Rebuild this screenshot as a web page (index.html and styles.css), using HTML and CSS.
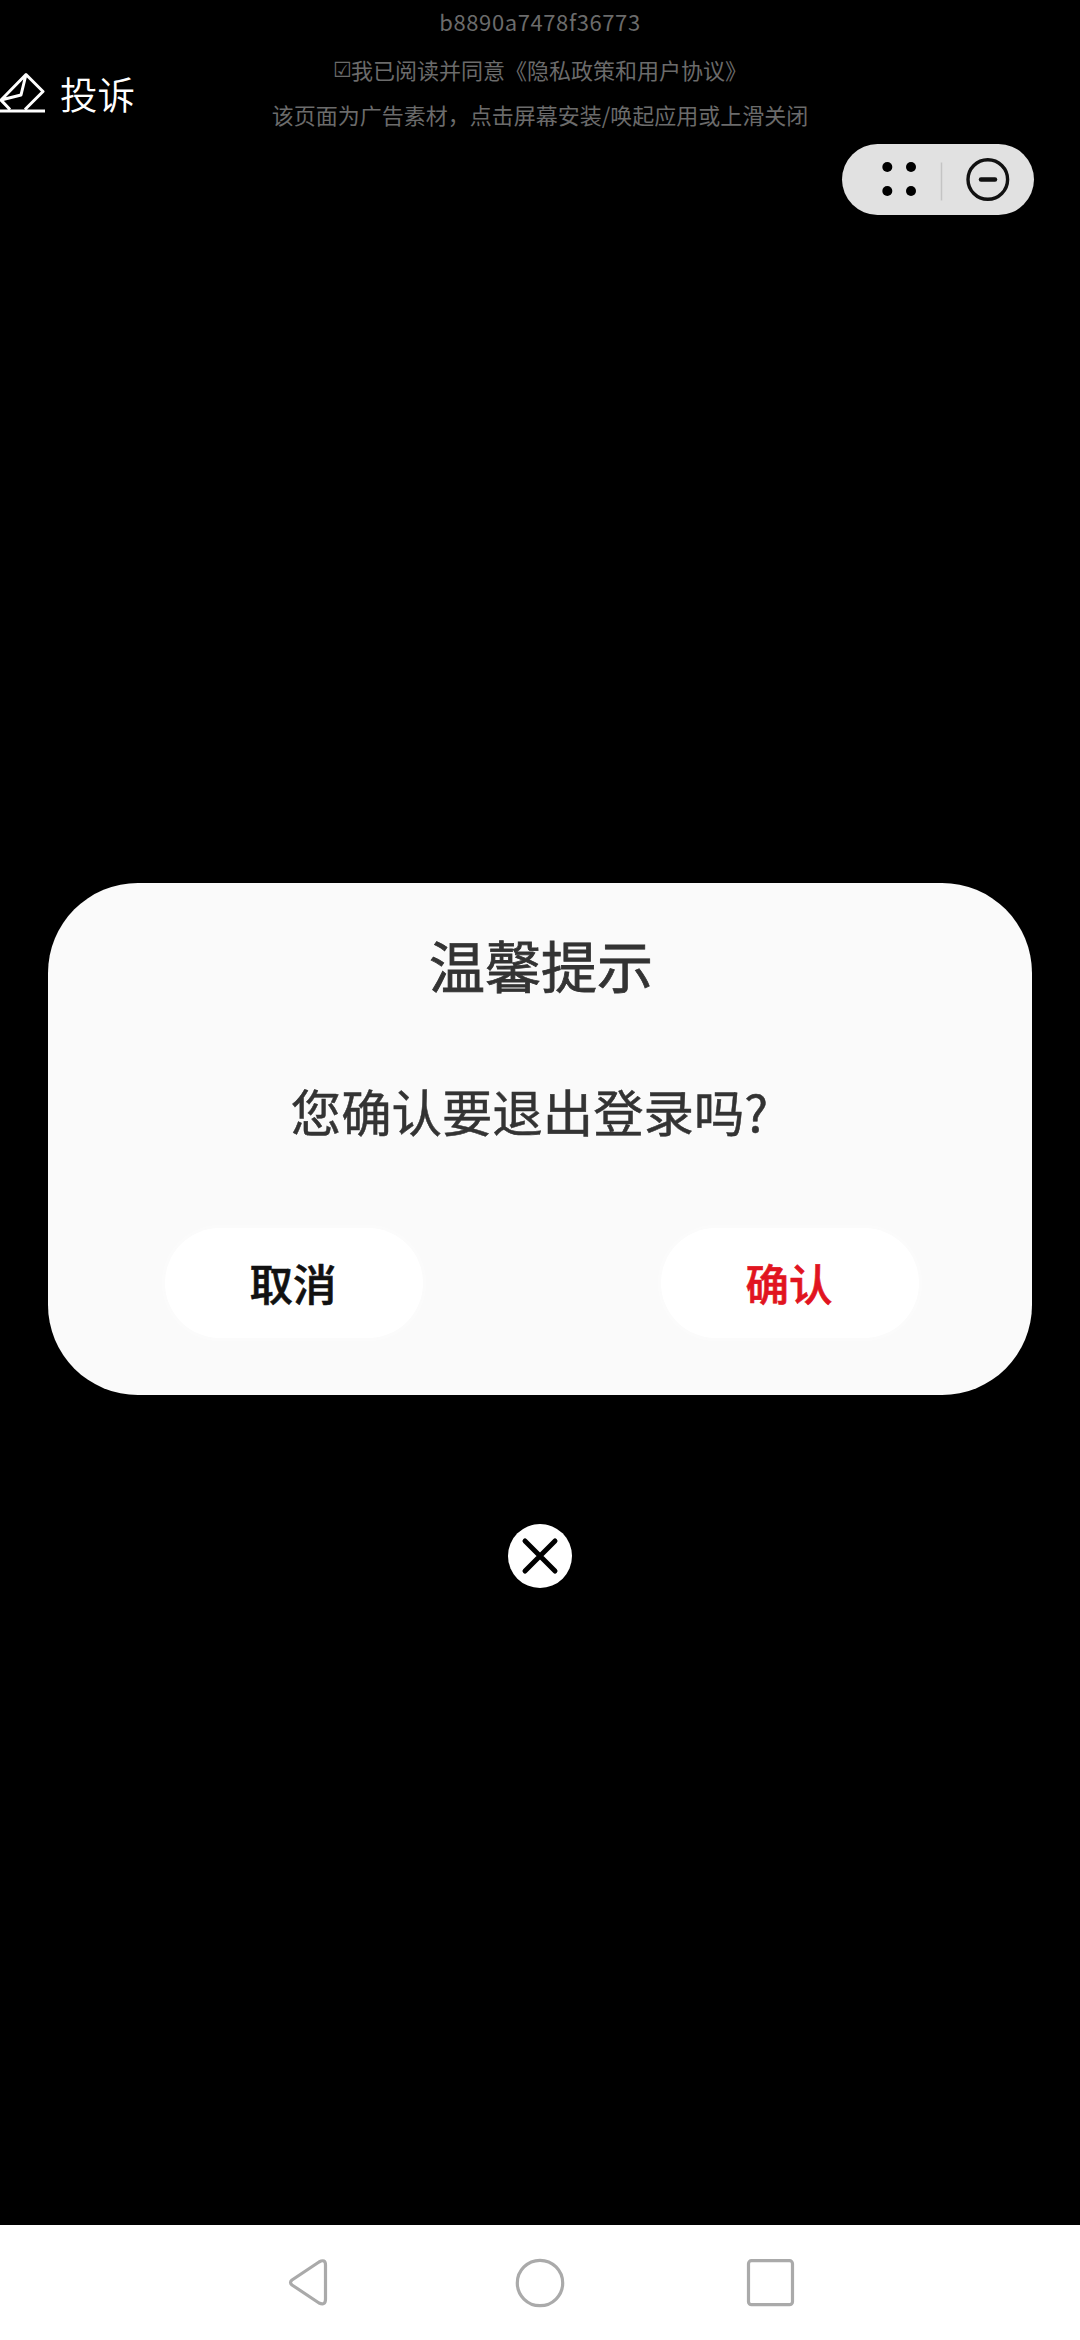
FILE: index.html
```html
<!DOCTYPE html>
<html lang="zh-CN">
<head>
<meta charset="utf-8">
<title>温馨提示</title>
<link rel="stylesheet" href="styles.css">
</head>
<body>
<div class="screen">
  <header class="header">
    <div class="report">
      <svg class="report-icon" width="46" height="42" viewBox="0 0 46 42" fill="none" stroke="#fff" stroke-width="3" stroke-linejoin="round">
        <path d="M10 37.500 1 28 26 2.500 43 19.500 25 37.500M26 2.500 21 23 1 28M0 39H45"/>
      </svg>
      <span class="report-label">投诉</span>
    </div>
    <div class="notice">
      <p class="notice-id">b8890a7478f36773</p>
      <p class="notice-agree"><span class="check">☑</span>我已阅读并同意《隐私政策和用户协议》</p>
      <p class="notice-ad">该页面为广告素材，点击屏幕安装/唤起应用或上滑关闭</p>
    </div>
  </header>
  <div class="capsule">
    <svg width="192" height="71" viewBox="0 0 192 71">
      <g fill="#000"><circle cx="45.300" cy="23" r="5"/><circle cx="69" cy="23" r="5"/><circle cx="45.300" cy="47" r="5"/><circle cx="69" cy="47" r="5"/></g>
      <path d="M99.500 18.500V56.500" stroke="#c4c4c4" stroke-width="1.500"/>
      <circle cx="145.800" cy="35.500" r="19.800" fill="none" stroke="#111" stroke-width="3.400"/>
      <path d="M139 35.500H153" stroke="#111" stroke-width="4.500" stroke-linecap="round"/>
    </svg>
  </div>
  <main class="dialog">
    <h1 class="title">温馨提示</h1>
    <p class="message">您确认要退出登录吗?</p>
    <div class="actions">
      <button class="action">取消</button>
      <button class="action confirm">确认</button>
    </div>
  </main>
  <button class="close" aria-label="关闭">
    <svg width="64" height="64" viewBox="0 0 64 64" fill="none" stroke="#000" stroke-width="5" stroke-linecap="round"><path d="M17 17 47 47M47 17 17 47"/></svg>
  </button>
  <nav class="navbar">
    <svg width="540" height="60" viewBox="270 2255 540 60" fill="none" stroke="#aaa" stroke-width="3.200" stroke-linejoin="round">
      <path d="M292 2280 319 2262Q325.500 2258.500 325.500 2265V2299Q325.500 2306 319 2303L292 2285Q289 2282.500 292 2280Z"/>
      <circle cx="540" cy="2283" r="22.700"/>
      <rect x="748.500" y="2260.700" width="44" height="44" rx="3"/>
    </svg>
  </nav>
</div>
</body>
</html>
```

FILE: styles.css
```css
* {
  box-sizing: border-box;
}

body {
  margin: 0;
  background: #000;
  font-family: "Noto Sans CJK SC", sans-serif;
}

h1,
p {
  margin: 0;
}

button {
  padding: 0;
  border: 0;
  font-family: inherit;
}

svg {
  display: block;
}

.screen {
  display: flex;
  flex-direction: column;
  width: 1080px;
  height: 2340px;
  overflow: hidden;
}

.header {
  display: grid;
  grid-template-columns: 1fr 600px 1fr;
  height: 144px;
}

.report {
  display: flex;
  align-items: flex-start;
  gap: 14px;
  padding-top: 72px;
  color: #fff;
}

.report-label {
  font-size: 37.5px;
  font-weight: 350;
  line-height: 42px;
}

.notice {
  color: #6b6b6b;
  font-size: 22px;
  text-align: center;
  white-space: nowrap;
}

.notice-id {
  height: 47px;
  line-height: 43px;
  letter-spacing: 0.6px;
}

.notice-agree {
  display: flex;
  justify-content: center;
  height: 45px;
  line-height: 44px;
}

.notice-ad {
  line-height: 44px;
}

.check {
  width: 18px;
  font-family: "DejaVu Sans", sans-serif;
  font-size: 21px;
  line-height: 46px;
}

.capsule {
  align-self: flex-end;
  width: 192px;
  height: 71px;
  margin-right: 46px;
  border-radius: 36px;
  background: #e1e1e1;
}

.dialog {
  width: 984px;
  height: 512px;
  margin: 668px auto 0;
  padding-top: 41px;
  border-radius: 90px;
  background: #fafafa;
  color: #333;
  text-align: center;
}

.title {
  padding-left: 2px;
  font-size: 56px;
  font-weight: 400;
  line-height: 80px;
  -webkit-text-stroke: 0.8px #333;
}

.message {
  margin-top: 67px;
  padding-right: 21px;
  font-size: 50.4px;
  line-height: 80px;
  -webkit-text-stroke: 0.5px #333;
}

.actions {
  display: flex;
  justify-content: space-between;
  padding: 77px 113px 0 117px;
}

.action {
  width: 258px;
  height: 110px;
  padding-right: 2px;
  border-radius: 55px;
  background: #fff;
  box-shadow: 0 0 6px #fdfdfd;
  color: #111;
  font-size: 43.5px;
  font-weight: 500;
  line-height: 104px;
  -webkit-text-stroke: 0.6px currentColor;
}

.confirm {
  color: #e11420;
}

.close {
  align-self: center;
  width: 64px;
  height: 64px;
  margin-top: 129px;
  border-radius: 50%;
  background: #fff;
}

.navbar {
  display: flex;
  justify-content: center;
  height: 115px;
  margin-top: auto;
  padding-top: 30px;
  background: #fff;
}
```
